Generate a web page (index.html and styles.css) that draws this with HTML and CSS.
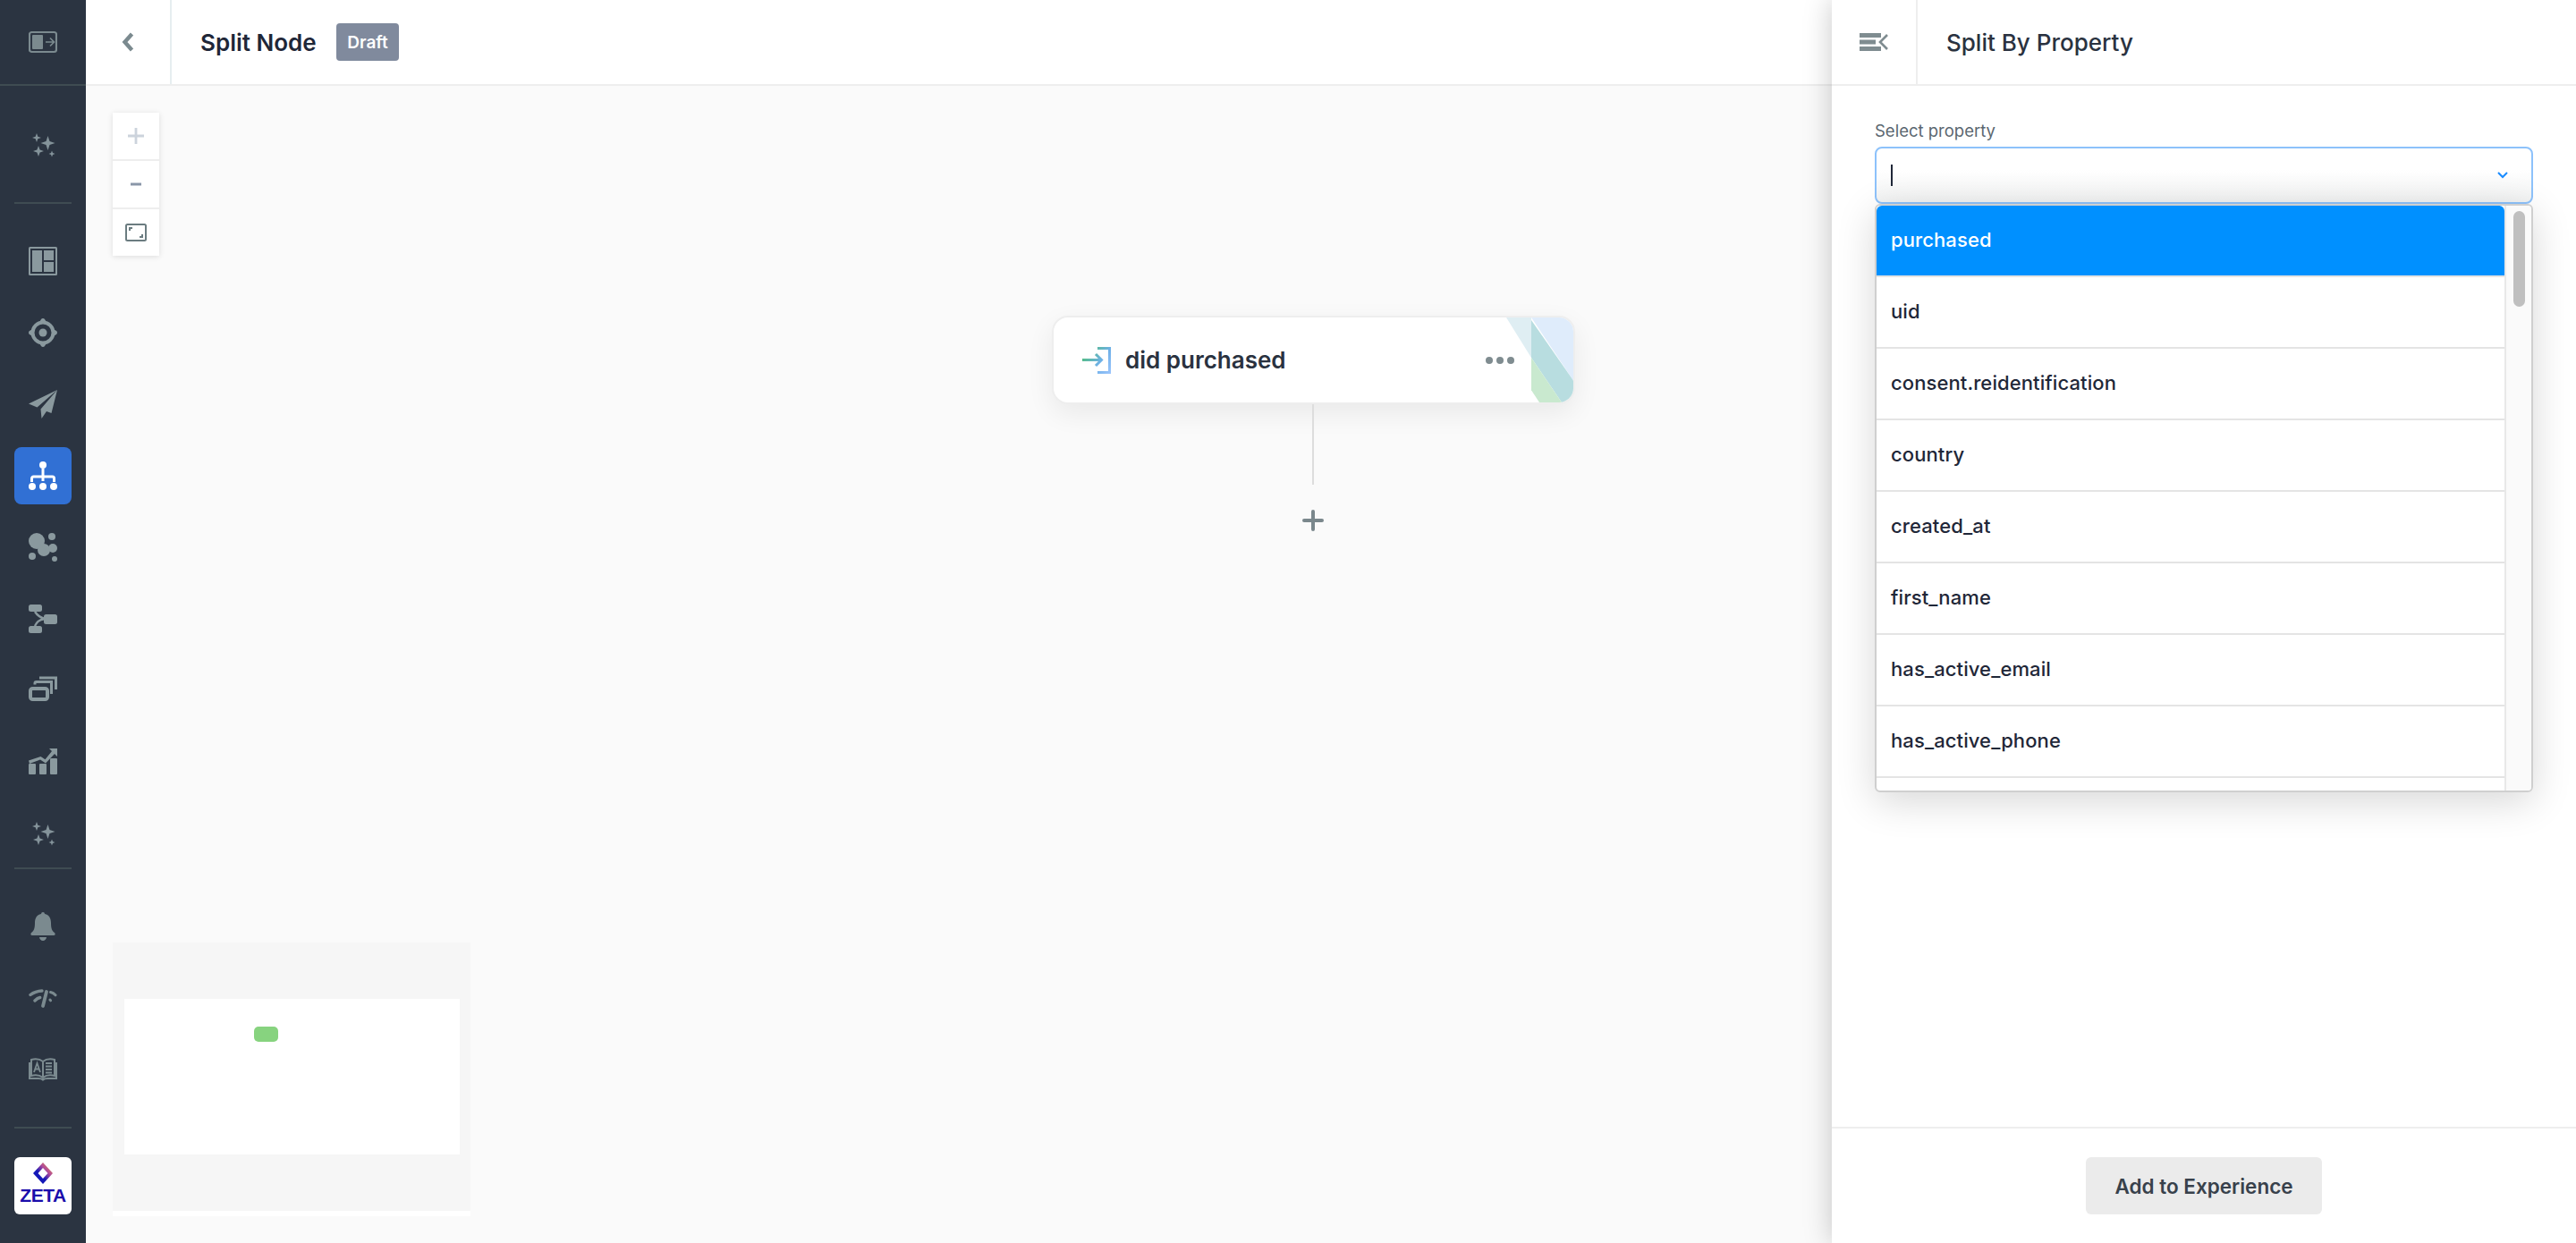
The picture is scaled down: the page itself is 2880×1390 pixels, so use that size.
FILE: index.html
```html
<!DOCTYPE html>
<html lang="en">

<head>
    <meta charset="UTF-8">
    <title>Split Node</title>
    <link rel="stylesheet" href="styles.css">
</head>

<body>
    <div class="app">
        <nav class="sidebar">
            <div class="side-top">
                <svg class="icon" viewBox="0 0 32 32"><rect x="1" y="5" width="30" height="22" rx="2.500" fill="none" stroke="#7b8a8f" stroke-width="2.200"/><rect x="4" y="8" width="12" height="16" rx="1" fill="#7b8a8f"/><path d="M19 16h9M24 11.500l4.500 4.500-4.500 4.500" fill="none" stroke="#7b8a8f" stroke-width="1.600"/></svg>
            </div>
            <div class="side-group side-ai">
                <a class="side-item"><svg class="icon" viewBox="0 0 32 32"><path id="spark" fill="#84939a" d="M9 3l1.300 3.700L14 8l-3.700 1.300L9 13 7.700 9.300 4 8l3.700-1.300zM21.500 6l2 6 6 2-6 2-2 6-2-6-6-2 6-2zM11 17l1.600 4.400L17 23l-4.400 1.600L11 29l-1.600-4.400L5 23l4.400-1.600zM26 22.500l1 2.500 2.500 1-2.500 1-1 2.500-1-2.500-2.500-1 2.500-1z"/></svg></a>
            </div>
            <hr class="side-sep">
            <div class="side-group">
                <a class="side-item"><svg class="icon" viewBox="0 0 32 32"><rect width="32" height="32" rx="1.500" fill="#8a999e"/><path d="M3 3h26v26H3zM16 3v26M16 16h13" fill="none" stroke="#2b3441" stroke-width="2"/></svg></a>
                <a class="side-item"><svg class="icon" viewBox="0 0 32 32"><circle cx="16" cy="16" r="11.500" fill="none" stroke="#8a999e" stroke-width="4"/><circle cx="16" cy="16" r="4.500" fill="#8a999e"/><path d="M12.500 3.500L14 1a2.500 2.500 0 0 1 4 0l1.500 2.500zM12.500 28.500L14 31a2.500 2.500 0 0 0 4 0l1.500-2.500zM3.500 12.500L1 14a2.500 2.500 0 0 0 0 4l2.500 1.500zM28.500 12.500L31 14a2.500 2.500 0 0 1 0 4l-2.500 1.500z" fill="#8a999e"/></svg></a>
                <a class="side-item"><svg class="icon" viewBox="0 0 32 32"><path d="M32 0L0 15.500l9.500 4L32 0 13.500 21.500 14.500 32l5.500-8 5.500 2z" fill="#8a999e"/></svg></a>
                <a class="side-item active"><svg class="icon" viewBox="0 0 32 32"><circle cx="16" cy="4" r="4" fill="#fff"/><circle cx="4" cy="28" r="4" fill="#fff"/><circle cx="16" cy="28" r="4" fill="#fff"/><circle cx="28" cy="28" r="4" fill="#fff"/><path d="M16 8v14M3.500 23v-4a2 2 0 0 1 2-2h21a2 2 0 0 1 2 2v4" fill="none" stroke="#fff" stroke-width="3"/></svg></a>
                <a class="side-item"><svg class="icon" viewBox="0 0 32 32"><g fill="#8a999e"><circle cx="9" cy="9" r="9"/><circle cx="26" cy="4" r="4"/><circle cx="17" cy="19" r="7"/><circle cx="27" cy="17" r="5"/><circle cx="4" cy="26" r="4"/><circle cx="29" cy="29" r="3"/><path d="M12 12l10 2-3 6z"/></g></svg></a>
                <a class="side-item"><svg class="icon" viewBox="0 0 32 32"><g fill="#8a999e"><rect width="15" height="8" rx="2.500"/><rect y="24" width="15" height="8" rx="2.500"/><rect x="17" y="11" width="15" height="11" rx="2.500"/></g><path d="M7 8c2 3 4 6 11 8M7 24c2-4 4-7 11-8" fill="none" stroke="#8a999e" stroke-width="2.400"/></svg></a>
                <a class="side-item"><svg class="icon" viewBox="0 0 32 32"><rect x="2" y="14" width="19" height="12" rx="2.500" fill="none" stroke="#8a999e" stroke-width="4"/><path d="M7 9.500V8a1.500 1.500 0 0 1 1.500-1.500H25.500V20M12 2h18.500v13" fill="none" stroke="#8a999e" stroke-width="3"/></svg></a>
                <a class="side-item"><svg class="icon" viewBox="0 0 32 32"><g fill="#8a999e"><rect y="18" width="8" height="12" rx="1"/><rect x="12" y="18" width="8" height="12" rx="1"/><rect x="24" y="12" width="8" height="18" rx="1"/><path d="M23 1h9v9l-3-3-10 10.500-6-4-12 4.500-1-3.500 13.500-4.500 5 3.300L26 4z"/></g></svg></a>
                <a class="side-item"><svg class="icon" viewBox="0 0 32 32"><use href="#spark"/></svg></a>
            </div>
            <hr class="side-sep sep-tight">
            <div class="side-group">
                <a class="side-item"><svg class="icon" viewBox="0 0 32 32"><path d="M16 0a2 2 0 0 1 2 2c5 1 7 5 7 10 0 6 1 9 4 11 1 1 1 3-1 3H4c-2 0-2-2-1-3 3-2 4-5 4-11 0-5 2-9 7-10a2 2 0 0 1 2-2zM12 28h8c0 2-2 4-4 4s-4-2-4-4z" fill="#7b8a8f"/></svg></a>
                <a class="side-item"><svg class="icon" viewBox="0 0 32 32"><g fill="none" stroke="#7b8a8f" stroke-linecap="round"><path d="M2 12.500C5.500 9.800 10 8.200 15 8M7 19c1.500-1.500 3.500-3 5.700-3.500" stroke-width="3.400"/><path d="M20 9L16 25" stroke-width="3.800"/><path d="M24.500 9.500c2.300.5 4 1.600 5.500 3.300M24 18l.5.8" stroke-width="3"/></g></svg></a>
                <a class="side-item"><svg class="icon" viewBox="0 0 32 32"><path d="M16 7C12 4 7 4 3 5v18c4-1 9-1 13 2 4-3 9-3 13-2V5c-4-1-9-1-13 2zM16 7v18M1 8v18h10c2 0 4 .5 5 1.500 1-1 3-1.500 5-1.500h10V8" fill="none" stroke="#7b8a8f" stroke-width="2"/><path d="M6 19l3.500-10 3.500 10M7.300 15.500h4.500M19 9h7M19 12.500h7M19 16h7M19 19.500h7" fill="none" stroke="#7b8a8f" stroke-width="1.800"/></svg></a>
            </div>
            <hr class="side-sep">
            <a class="zeta-tile">
                <svg class="zeta-mark" viewBox="0 0 22 24"><defs><linearGradient id="zg" x1="0" y1="1" x2="1" y2="0"><stop offset="0.400" stop-color="#1418b8"/><stop offset="0.650" stop-color="#b04a9a"/><stop offset="1" stop-color="#f0a030"/></linearGradient></defs><path d="M11 0L22 12 11 24 0 12zM11 6L5.500 12 11 18l5.500-6z" fill="url(#zg)" fill-rule="evenodd"/></svg>
                <span class="zeta-word">ZETA</span>
            </a>
        </nav>

        <main class="main">
            <header class="topbar">
                <a class="back-btn"><svg class="chev" viewBox="0 0 14 22"><path d="M11.500 2L3.500 11l8 9" fill="none" stroke="#7b8a8f" stroke-width="4.400"/></svg></a>
                <h1 class="page-title">Split Node</h1>
                <span class="badge">Draft</span>
            </header>
            <div class="canvas">
                <div class="zoom-ctl">
                    <button class="zoom-btn"><svg width="18" height="18" viewBox="0 0 18 18"><path d="M9 0v18M0 9h18" stroke="#ccd3dc" stroke-width="2.800"/></svg></button>
                    <button class="zoom-btn"><svg width="12" height="4" viewBox="0 0 12 4"><path d="M0 2h12" stroke="#8a96a8" stroke-width="3"/></svg></button>
                    <button class="zoom-btn"><svg width="24" height="20" viewBox="0 0 24 20"><rect x="1" y="1" width="22" height="18" rx="1.500" fill="none" stroke="#6b7c80" stroke-width="2"/><path d="M5 8V5h3M19 12v3h-3" fill="none" stroke="#6b7c80" stroke-width="2"/></svg></button>
                </div>

                <div class="node">
                    <svg class="node-art" viewBox="0 0 581 97" preserveAspectRatio="none">
                        <path d="M506 0h28v46z" fill="#dfeef3"/>
                        <path d="M534 0h47v72z" fill="#dfecfb"/>
                        <path d="M534 3l47 69v25h-13l-34-51z" fill="#b8dde0"/>
                        <path d="M534 46l34 51h-25l-9-14z" fill="#c9e9cf"/>
                    </svg>
                    <svg class="node-icon" viewBox="0 0 32 30"><defs><linearGradient id="ng" gradientUnits="userSpaceOnUse" x1="0" y1="4" x2="32" y2="28"><stop offset="0" stop-color="#4cc06a"/><stop offset="0.600" stop-color="#6fb0e8"/><stop offset="1" stop-color="#9ac4fb"/></linearGradient></defs><path d="M17 1.500h13.500v27H17M0 14.500h21M15 8l6.500 6.500L15 21" fill="none" stroke="url(#ng)" stroke-width="3"/></svg>
                    <span class="node-name">did purchased</span>
                    <span class="node-dots"><i></i><i></i><i></i></span>
                </div>
                <div class="node-link"></div>
                <svg class="node-add" viewBox="0 0 24 24"><path d="M12 2v20M2 12h20" stroke="#7a878c" stroke-width="4" stroke-linecap="round"/></svg>

                <div class="minimap">
                    <div class="minimap-view"><div class="minimap-node"></div></div>
                </div>
            </div>
        </main>

        <aside class="panel">
            <header class="panel-head">
                <a class="panel-toggle"><svg width="32" height="20" viewBox="0 0 32 20"><path d="M0 2.500h24M0 10h18M0 17.500h24" stroke="#7f8c90" stroke-width="5"/><path d="M31 2l-8 8 8 8" fill="none" stroke="#7f8c90" stroke-width="2.600"/></svg></a>
                <h2 class="panel-title">Split By Property</h2>
            </header>
            <div class="panel-body">
                <label class="field-label">Select property</label>
                <div class="select-box">
                    <span class="caret"></span>
                    <svg class="select-chev" width="12" height="8" viewBox="0 0 12 8"><path d="M1 1l5 5 5-5" fill="none" stroke="#1a8cff" stroke-width="2"/></svg>
                </div>
                <div class="menu">
                    <ul class="menu-list">
                        <li class="menu-row selected">purchased</li>
                        <li class="menu-row">uid</li>
                        <li class="menu-row">consent.reidentification</li>
                        <li class="menu-row">country</li>
                        <li class="menu-row">created_at</li>
                        <li class="menu-row">first_name</li>
                        <li class="menu-row">has_active_email</li>
                        <li class="menu-row">has_active_phone</li>
                        <li class="menu-row"></li>
                    </ul>
                    <div class="menu-track"><div class="menu-thumb"></div></div>
                </div>
            </div>
            <footer class="panel-foot">
                <button class="add-btn">Add to Experience</button>
            </footer>
        </aside>
    </div>
</body>

</html>
```

FILE: styles.css
```css
html, body {
    margin: 0;
    padding: 0;
    height: 100%;
}

body {
    font-family: Inter, Lato, Arial, sans-serif;
    color: #2a3240;
    overflow: hidden;
}

.app {
    display: flex;
    height: 100vh;
}

.icon {
    display: block;
    width: 32px;
    height: 32px;
}

/* sidebar */
.sidebar {
    flex: 0 0 96px;
    display: flex;
    flex-direction: column;
    align-items: center;
    background: #2b3441;
}

.side-top {
    align-self: stretch;
    display: flex;
    align-items: center;
    justify-content: center;
    height: 96px;
    flex: none;
    box-sizing: border-box;
    border-bottom: 2px solid #3f4c52;
}

.side-group {
    display: flex;
    flex-direction: column;
    gap: 16px;
}

.side-ai {
    margin-top: 34px;
}

.side-item {
    display: flex;
    align-items: center;
    justify-content: center;
    width: 64px;
    height: 64px;
    border-radius: 8px;
}

.side-item.active {
    background: #3170d4;
}

.side-sep {
    width: 64px;
    height: 2px;
    margin: 32px 0;
    border: 0;
    background: #3f4c52;
    flex: none;
}

.sep-tight {
    margin-top: 6px;
}

.zeta-tile {
    display: flex;
    flex-direction: column;
    align-items: center;
    width: 64px;
    height: 64px;
    padding-top: 6px;
    box-sizing: border-box;
    background: #fff;
    border-radius: 6px;
}

.zeta-mark {
    width: 22px;
    height: 24px;
}

.zeta-word {
    margin-top: 1px;
    font-family: "Liberation Sans", Arial, sans-serif;
    font-size: 21px;
    line-height: 24px;
    font-weight: 700;
    color: #1a0dab;
    letter-spacing: -0.5px;
}

/* top bar + canvas */
.main {
    flex: 1;
    display: flex;
    flex-direction: column;
    min-width: 0;
}

.topbar {
    display: flex;
    align-items: center;
    height: 96px;
    flex: none;
    box-sizing: border-box;
    background: #fff;
    border-bottom: 2px solid #eeeeee;
}

.back-btn {
    display: flex;
    align-items: center;
    justify-content: center;
    align-self: stretch;
    width: 96px;
    box-sizing: border-box;
    border-right: 2px solid #e6eef0;
}

.chev {
    width: 14px;
    height: 22px;
}

.page-title {
    margin: 0 20px 0 32px;
    width: 132px;
    white-space: nowrap;
    font-size: 26px;
    font-weight: 600;
    color: #1f2738;
}

.badge {
    display: flex;
    align-items: center;
    justify-content: center;
    width: 70px;
    height: 42px;
    background: #808a9d;
    border-radius: 4px;
    color: #fff;
    font-size: 19px;
    font-weight: 600;
}

.canvas {
    flex: 1;
    position: relative;
    background: #fafafa;
}

.zoom-ctl {
    position: absolute;
    left: 30px;
    top: 30px;
    display: flex;
    flex-direction: column;
    gap: 2px;
    background: #eeeeee;
    box-shadow: 0 1px 6px rgba(0, 0, 0, 0.12);
}

.zoom-btn {
    display: flex;
    align-items: center;
    justify-content: center;
    width: 52px;
    height: 52px;
    padding: 0;
    border: 0;
    background: #fff;
}

.node {
    position: absolute;
    left: 1080px;
    top: 257px;
    width: 585px;
    height: 99px;
    box-sizing: border-box;
    display: flex;
    align-items: center;
    padding: 0 66px 0 32px;
    background: #fff;
    border: 2px solid #eeeeee;
    border-radius: 18px;
    box-shadow: 0 10px 30px rgba(0, 0, 0, 0.07);
    overflow: hidden;
}

.node-art {
    position: absolute;
    left: 0;
    top: 0;
    width: 581px;
    height: 95px;
}

.node-icon {
    position: relative;
    width: 32px;
    height: 30px;
    flex: none;
}

.node-name {
    position: relative;
    margin-left: 16px;
    font-size: 26px;
    font-weight: 600;
    color: #2a3240;
}

.node-dots {
    position: relative;
    margin-left: auto;
    display: flex;
    gap: 4px;
}

.node-dots i {
    display: block;
    width: 8px;
    height: 8px;
    border-radius: 50%;
    background: #7f8c90;
}

.node-link {
    position: absolute;
    left: 1371px;
    top: 356px;
    width: 2px;
    height: 90px;
    background: #dddddd;
}

.node-add {
    position: absolute;
    left: 1360px;
    top: 474px;
    width: 24px;
    height: 24px;
}

.minimap {
    position: absolute;
    left: 30px;
    top: 958px;
    width: 400px;
    height: 306px;
    box-sizing: border-box;
    padding: 63px 12px 0 13px;
    background: #f6f6f6;
    border-bottom: 6px solid #fff;
}

.minimap-view {
    position: relative;
    height: 174px;
    background: #fff;
}

.minimap-node {
    position: absolute;
    left: 145px;
    top: 31px;
    width: 27px;
    height: 17px;
    background: #87d37f;
    border-radius: 5px;
}

/* right panel */
.panel {
    flex: 0 0 832px;
    display: flex;
    flex-direction: column;
    position: relative;
    background: #fff;
    box-shadow: 0 0 30px rgba(0, 0, 0, 0.22);
}

.panel-head {
    display: flex;
    align-items: center;
    height: 96px;
    flex: none;
    box-sizing: border-box;
    border-bottom: 2px solid #eeeeee;
}

.panel-toggle {
    display: flex;
    align-items: center;
    justify-content: center;
    align-self: stretch;
    width: 96px;
    box-sizing: border-box;
    border-right: 2px solid #eeeeee;
}

.panel-title {
    margin: 0 0 0 32px;
    font-size: 26px;
    font-weight: 500;
    color: #2a3240;
}

.panel-body {
    flex: 1;
    padding: 38px 48px 0;
}

.field-label {
    display: block;
    margin-bottom: 6px;
    font-size: 18.5px;
    line-height: 24px;
    color: #5b6770;
}

.select-box {
    display: flex;
    align-items: center;
    justify-content: space-between;
    height: 64px;
    box-sizing: border-box;
    padding: 0 26px 0 16px;
    border: 2px solid #8dc2fb;
    border-radius: 8px;
    background: linear-gradient(#fff 40%, #f2f3f3);
}

.caret {
    width: 2px;
    height: 24px;
    background: #1f2738;
}

.menu {
    display: flex;
    height: 658px;
    box-sizing: border-box;
    overflow: hidden;
    background: #fff;
    border: 2px solid #cfcfcf;
    border-radius: 6px;
    box-shadow: 0 10px 44px rgba(0, 0, 0, 0.16);
}

.menu-list {
    flex: 1;
    margin: 0;
    padding: 0;
    list-style: none;
    overflow: hidden;
}

.menu-row {
    height: 78px;
    padding-left: 16px;
    border-bottom: 2px solid #e4e4e4;
    font-size: 22px;
    font-weight: 500;
    letter-spacing: 0.1px;
    line-height: 77px;
    color: #1f2738;
}

.menu-row.selected {
    background: #0090ff;
    border-radius: 6px 6px 0 0;
    color: #fff;
}

.menu-track {
    flex: 0 0 30px;
    box-sizing: border-box;
    padding: 6px 7px 0 8px;
    background: #fafafa;
    border-left: 2px solid #e8e8e8;
}

.menu-thumb {
    height: 107px;
    background: #bfbfbf;
    border-radius: 8px;
}

.panel-foot {
    display: flex;
    align-items: center;
    justify-content: center;
    height: 130px;
    flex: none;
    box-sizing: border-box;
    border-top: 2px solid #eeeeee;
}

.add-btn {
    width: 264px;
    height: 64px;
    padding: 0;
    border: 0;
    border-radius: 6px;
    background: #ebebeb;
    font-family: inherit;
    font-size: 22.5px;
    font-weight: 600;
    color: #38414b;
}
```
